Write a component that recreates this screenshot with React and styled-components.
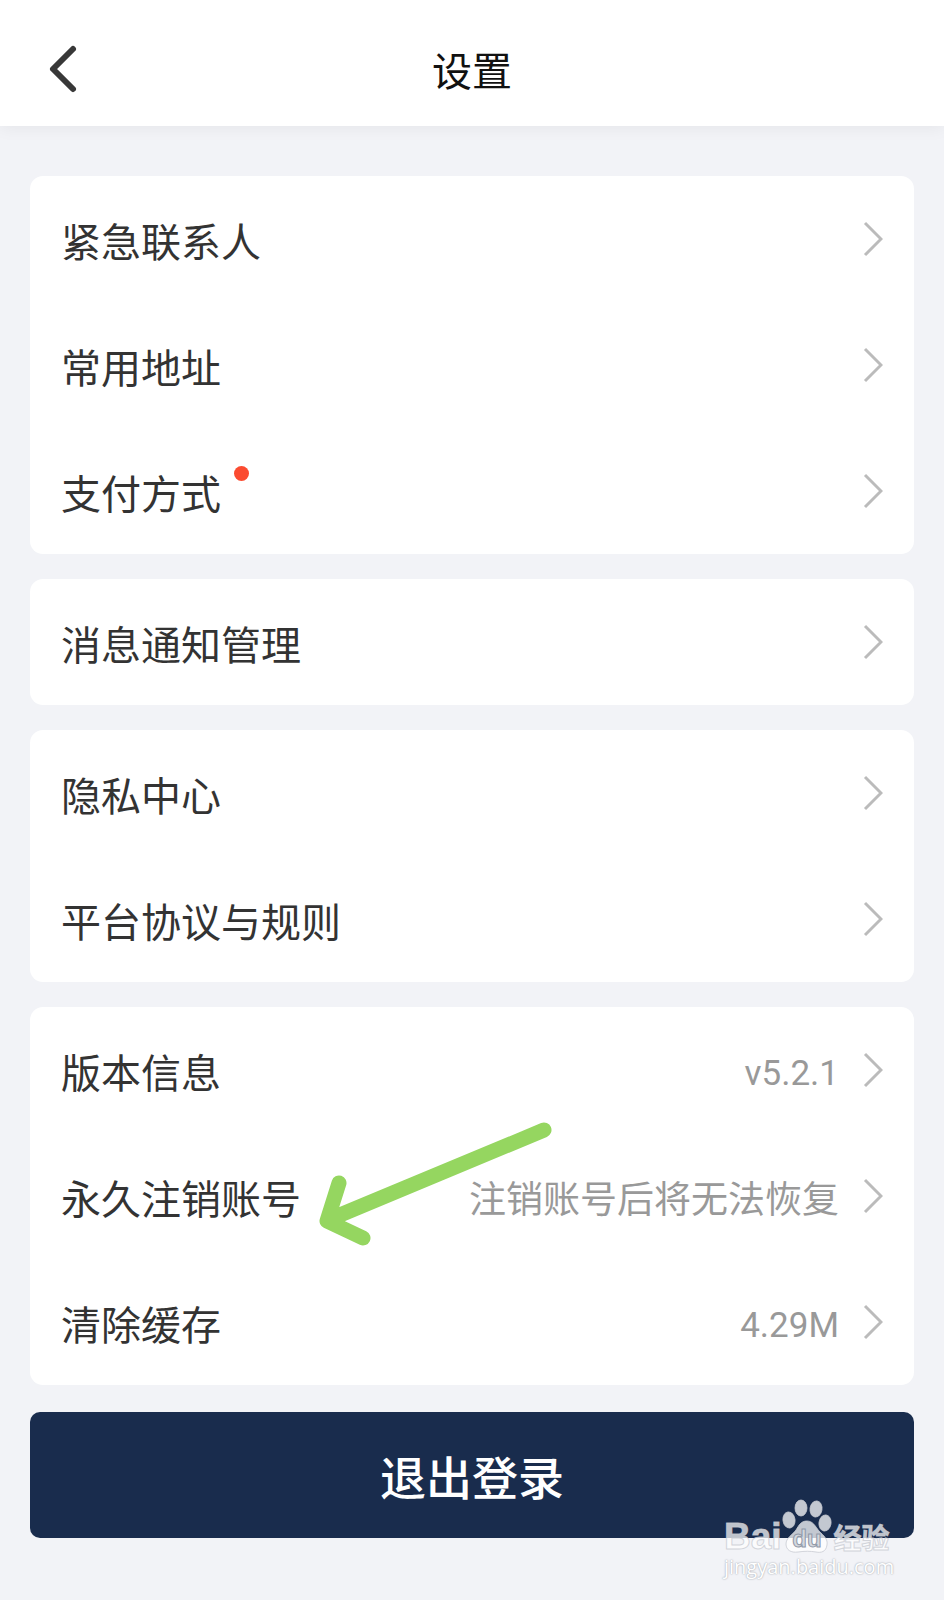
import React from "react";
import styled, { createGlobalStyle } from "styled-components";

const GlobalStyle = createGlobalStyle`
  * {
    box-sizing: border-box;
  }
  body {
    margin: 0;
    background: #f2f3f7;
    font-family: Roboto, "Noto Sans CJK SC", sans-serif;
  }
  button {
    border: none;
    font-family: inherit;
    cursor: pointer;
  }
`;

const Page = styled.div`
  min-height: 100vh;
  background: #f2f3f7;
`;

const Header = styled.header`
  display: grid;
  grid-template-columns: 120px 1fr 120px;
  align-items: center;
  height: 126px;
  padding-top: 12px;
  background: #fff;
  box-shadow: 0 2px 16px rgba(0, 0, 0, 0.06);
  h1 {
    margin: 0;
    padding-top: 8px;
    font-size: 40px;
    line-height: 56px;
    font-weight: 400;
    text-align: center;
    color: #111;
  }
`;

const BackButton = styled.button`
  display: flex;
  padding: 0 0 0 44px;
  background: none;
`;

const Content = styled.main`
  display: flex;
  flex-direction: column;
  gap: 25px;
  padding: 50px 30px 60px;
`;

const Card = styled.section`
  background: #fff;
  border-radius: 13px;
`;

const Row = styled.button`
  display: flex;
  align-items: center;
  width: 100%;
  height: 126px;
  padding: 0 31px;
  background: none;
  text-align: left;
`;

const Label = styled.span`
  position: relative;
  padding-top: 10px;
  font-size: 40px;
  line-height: 56px;
  color: #333;
`;

const Value = styled.span`
  margin-left: auto;
  padding-top: ${({ $numeric }) => ($numeric ? "8px" : "10px")};
  font-size: ${({ $numeric }) => ($numeric ? "35px" : "37px")};
  line-height: 56px;
  color: #999;
`;

const Chevron = styled.svg`
  flex: none;
  margin-left: ${({ $push }) => ($push ? "auto" : "24px")};
`;

const Dot = styled.i`
  position: absolute;
  top: 8px;
  left: calc(100% + 13px);
  width: 15px;
  height: 15px;
  border-radius: 50%;
  background: #fb4b30;
`;

const Arrow = styled.svg`
  position: absolute;
  top: -49px;
  left: calc(100% + 10px);
  pointer-events: none;
`;

const Footer = styled.div`
  position: relative;
  margin-top: 2px;
`;

const LogoutButton = styled.button`
  display: block;
  width: 100%;
  height: 126px;
  padding: 8px 0 0;
  border-radius: 10px;
  background: #192c4d;
  color: #fff;
  font-size: 46px;
  font-weight: 500;
  line-height: 56px;
`;

const Watermark = styled.div`
  position: absolute;
  top: 87px;
  right: 20px;
  width: 170px;
  color: rgba(255, 255, 255, 0.74);
  pointer-events: none;
`;

const Brand = styled.div`
  display: flex;
  align-items: flex-end;
  height: 56px;
  font-family: "Liberation Sans", "Noto Sans CJK SC", sans-serif;
  font-weight: 700;
  -webkit-text-stroke: 1px rgba(200, 203, 210, 0.8);
`;

const BrandLatin = styled.span`
  font-size: 37px;
  line-height: 36px;
`;

const BrandChinese = styled.span`
  margin-left: 2px;
  font-size: 28px;
  line-height: 30px;
`;

const Site = styled.div`
  font-family: "Open Sans", sans-serif;
  font-size: 20px;
  line-height: 24px;
  color: #fff;
  text-shadow: 0 0 2px #a4a8b0, 0 0 1px #c4c7ce;
`;

const groups = [
  [
    { label: "紧急联系人" },
    { label: "常用地址" },
    { label: "支付方式", dot: true },
  ],
  [{ label: "消息通知管理" }],
  [{ label: "隐私中心" }, { label: "平台协议与规则" }],
  [
    { label: "版本信息", value: "v5.2.1", numeric: true },
    { label: "永久注销账号", value: "注销账号后将无法恢复", arrow: true },
    { label: "清除缓存", value: "4.29M", numeric: true },
  ],
];

const PointerArrow = () => (
  <Arrow width="250" height="140" viewBox="0 0 250 140" aria-hidden="true">
    <path
      d="M233 16 L17 106 M28 69 L16 107 L52 124"
      fill="none"
      stroke="#95d660"
      strokeWidth="15"
      strokeLinecap="round"
      strokeLinejoin="round"
    />
  </Arrow>
);

const Paw = () => (
  <svg width="50" height="56" viewBox="0 0 50 56" aria-hidden="true">
    <g
      fill="#fff"
      fillOpacity="0.74"
      stroke="#c8cbd2"
      strokeOpacity="0.8"
      strokeWidth="1"
    >
      <ellipse cx="7" cy="21" rx="6" ry="8" transform="rotate(-8 7 21)" />
      <ellipse cx="19" cy="9" rx="6" ry="8" />
      <ellipse cx="34" cy="10" rx="6" ry="8" transform="rotate(8 34 10)" />
      <ellipse cx="43" cy="24" rx="6" ry="8" transform="rotate(8 43 24)" />
      <path d="M25 22 C31 22 33 27 37 32 C42 37 46 40 45 46 C44 53 39 54 34 53 C28 52 23 52 16 53 C9 54 4 51 4 45 C4 39 10 36 14 31 C17 26 19 22 25 22 Z" />
    </g>
    <text
      x="25"
      y="48"
      textAnchor="middle"
      fontFamily="Liberation Sans, sans-serif"
      fontSize="24"
      fontWeight="700"
      fill="#d4d7dd"
      stroke="#8f98a8"
      strokeWidth="1"
    >
      du
    </text>
  </svg>
);

const SettingRow = ({ label, value, numeric, dot, arrow }) => (
  <Row type="button">
    <Label>
      {label}
      {dot && <Dot />}
      {arrow && <PointerArrow />}
    </Label>
    {value && <Value $numeric={numeric}>{value}</Value>}
    <Chevron
      $push={!value}
      width="20"
      height="36"
      viewBox="0 0 20 36"
      aria-hidden="true"
    >
      <path d="M2 2 L18 18 L2 34" fill="none" stroke="#bbb" strokeWidth="3" />
    </Chevron>
  </Row>
);

const App = () => {
  return (
    <>
      <GlobalStyle />
      <Page>
        <Header>
          <BackButton type="button" aria-label="返回">
            <svg width="36" height="50" viewBox="0 0 36 50" aria-hidden="true">
              <path
                d="M29 5 L9 25 L29 45"
                fill="none"
                stroke="#383838"
                strokeWidth="6"
                strokeLinecap="round"
                strokeLinejoin="round"
              />
            </svg>
          </BackButton>
          <h1>设置</h1>
        </Header>
        <Content>
          {groups.map((rows) => (
            <Card key={rows[0].label}>
              {rows.map((row) => (
                <SettingRow key={row.label} {...row} />
              ))}
            </Card>
          ))}
          <Footer>
            <LogoutButton type="button">退出登录</LogoutButton>
            <Watermark>
              <Brand>
                <BrandLatin>Bai</BrandLatin>
                <Paw />
                <BrandChinese>经验</BrandChinese>
              </Brand>
              <Site>jingyan.baidu.com</Site>
            </Watermark>
          </Footer>
        </Content>
      </Page>
    </>
  );
};

export default App;
